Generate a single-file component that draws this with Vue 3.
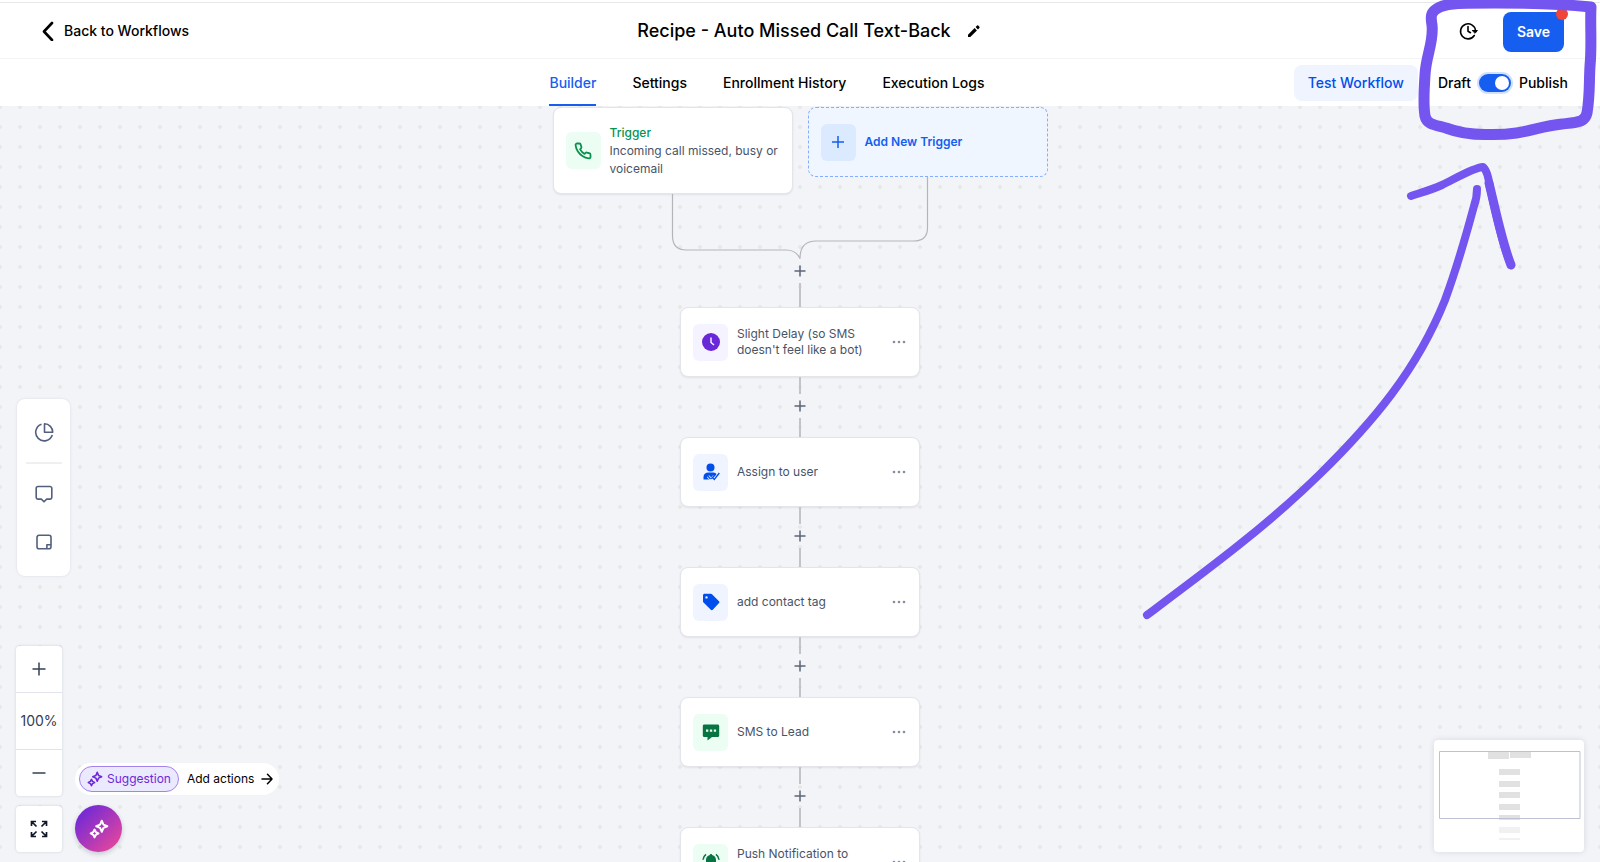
<script setup>
import { ref } from "vue";

const tabs = ["Builder", "Settings", "Enrollment History", "Execution Logs"];
const activeTab = ref("Builder");
const published = ref(true);
const zoom = ref(100);

const steps = [
  { id: 1, label: "Slight Delay (so SMS doesn't feel like a bot)", icon: "clock", tone: "purple" },
  { id: 2, label: "Assign to user", icon: "user", tone: "blue" },
  { id: 3, label: "add contact tag", icon: "tag", tone: "blue" },
  { id: 4, label: "SMS to Lead", icon: "sms", tone: "green" },
  { id: 5, label: "Push Notification to assigned user", icon: "bell", tone: "green" },
];
</script>

<template>
  <div class="page">
    <header class="topbar">
      <a href="#" class="back">
        <svg width="13" height="20" viewBox="0 0 13 20" fill="none" stroke="currentColor" stroke-width="2.600" stroke-linecap="round" stroke-linejoin="round">
          <path d="M10 2 2 10.500l8 8.500" />
        </svg>
        Back to Workflows
      </a>
      <div class="title">
        <h1>Recipe - Auto Missed Call Text-Back</h1>
        <button class="icon-button" aria-label="Rename workflow">
          <svg width="14" height="14" viewBox="0 0 14 14" fill="currentColor">
            <path d="M1 10.700V13h2.300l6.600-6.600-2.300-2.300zM8.600 3.100 10.100 1.600a.8.8 0 0 1 1.100 0l1.200 1.200a.8.8 0 0 1 0 1.100L10.900 5.400z" />
          </svg>
        </button>
      </div>
      <div class="save-area">
        <button class="icon-button" aria-label="Version history">
          <svg width="20" height="20" viewBox="0 0 20 20" fill="none" stroke="currentColor" stroke-width="1.600" stroke-linecap="round" stroke-linejoin="round">
            <path d="M15.300 14.500A7.500 7.500 0 1 1 16.500 9.500M9 5.500v4.700l2.500 1.500" />
            <path d="M13.600 9.500h4.800L16.300 12z" fill="currentColor" stroke-width="1" />
          </svg>
        </button>
        <button class="save">
          Save
          <span class="unsaved"></span>
        </button>
      </div>
    </header>

    <div class="tabbar">
      <nav class="tabs">
        <button
          v-for="tab in tabs"
          :key="tab"
          class="tab"
          :class="{ active: tab === activeTab }"
          @click="activeTab = tab"
        >
          {{ tab }}
        </button>
      </nav>
      <div class="publish-area">
        <button class="test">
          Test Workflow
        </button>
        <div class="publish">
          <label for="published">Draft</label>
          <input id="published" v-model="published" type="checkbox" role="switch">
          <label for="published">Publish</label>
        </div>
      </div>
    </div>

    <main class="canvas">
      <div class="flow">
        <div class="triggers">
          <article class="card trigger">
            <span class="badge green">
              <svg width="18" height="18" viewBox="0 0 24 24" fill="none" stroke="currentColor" stroke-width="2.400" stroke-linecap="round" stroke-linejoin="round">
                <path d="M22 16.900v3a2 2 0 0 1-2.200 2 19.800 19.800 0 0 1-8.600-3.100 19.500 19.500 0 0 1-6-6A19.800 19.800 0 0 1 2.100 4.200 2 2 0 0 1 4.100 2h3a2 2 0 0 1 2 1.700c.1 1 .4 1.900.7 2.800a2 2 0 0 1-.5 2.100L8.100 9.900a16 16 0 0 0 6 6l1.300-1.300a2 2 0 0 1 2.100-.4c.9.300 1.800.6 2.800.7A2 2 0 0 1 22 16.900z" />
              </svg>
            </span>
            <p class="trigger-text">
              <strong>Trigger</strong>
              Incoming call missed, busy or voicemail
            </p>
          </article>
          <button class="add-trigger">
            <span class="badge sky">
              <svg width="14" height="14" viewBox="0 0 14 14" stroke="currentColor" stroke-width="1.500"><path d="M7 1v12M1 7h12" /></svg>
            </span>
            Add New Trigger
          </button>
        </div>

        <svg class="merge" width="496" height="65" viewBox="0 0 496 65" fill="none" stroke="#b4b5bb" stroke-width="1.200">
          <path d="M120.500 0v42q0 14 14 14H234q10 0 14 8.500" />
          <path d="M375.500-17V34q0 13-14 13H264q-16 0-16 17.500" />
        </svg>

        <template v-for="(step, i) in steps" :key="step.id">
          <div class="connector" :class="{ first: i === 0 }">
            <button class="add-step" aria-label="Add step">
              <svg width="12" height="12" viewBox="0 0 12 12" stroke="currentColor" stroke-width="1.500"><path d="M6 .500v11M.500 6h11" /></svg>
            </button>
          </div>
          <article class="card step">
            <span class="badge" :class="step.tone">
              <svg v-if="step.icon === 'clock'" width="18" height="18" viewBox="0 0 18 18">
                <circle cx="9" cy="9" r="9" fill="currentColor" />
                <path d="M9 4.500V9.500l3 2.500" fill="none" stroke="#fff" stroke-width="1.400" />
              </svg>
              <svg v-else-if="step.icon === 'user'" width="18" height="18" viewBox="0 0 18 18" fill="none">
                <circle cx="8.500" cy="4.500" r="4" fill="currentColor" />
                <path d="M1.500 16.500V14c0-3 2-4.500 5-4.500h4c2 0 3.500.6 4.300 2L11 15.500l-1 1z" fill="currentColor" />
                <path d="m6 13.300 3.200 3.200 3-3.200M10.500 14.500l1.800 2L17.500 10" stroke="#eff4ff" stroke-width="3" />
                <path d="m6 13.300 2.600 2.700M10.300 14.300l2 2.200L17.300 10M9.300 15.800 13 12" stroke="currentColor" stroke-width="1.300" />
              </svg>
              <svg v-else-if="step.icon === 'tag'" width="18" height="18" viewBox="0 0 18 18" fill="currentColor">
                <path fill-rule="evenodd" d="M2.500.800h6.300c.5 0 .9.200 1.200.5l7 7c.5.500.5 1.300 0 1.800L10.800 16.800c-.6.600-1.500.6-2 0l-7.300-7.300c-.3-.3-.5-.8-.5-1.300V2.300c0-.8.700-1.500 1.500-1.500zM4.500 3.200a1.200 1.200 0 1 0 0 2.400 1.200 1.200 0 0 0 0-2.400z" />
              </svg>
              <svg v-else-if="step.icon === 'sms'" width="18" height="18" viewBox="0 0 18 18" fill="currentColor">
                <path fill-rule="evenodd" d="M2.300 1.500h13.400c.9 0 1.500.6 1.500 1.500v9.500c0 .9-.6 1.500-1.500 1.500H10l-4.500 3.500V14H2.300C1.400 14 .8 13.400.8 12.500V3c0-.9.600-1.500 1.500-1.500zM4 6.500v2.300h2.300V6.500zm3.900 0v2.300h2.300V6.500zm3.900 0v2.300h2.300V6.500z" />
              </svg>
              <svg v-else width="18" height="18" viewBox="0 0 18 18" fill="currentColor">
                <path d="M9 1c.7 0 1.200.5 1.200 1.100C12.600 2.600 14 4.500 14 7v4l1.500 2v1h-13v-1L4 11V7c0-2.500 1.400-4.400 3.800-4.900C7.800 1.500 8.300 1 9 1zM7 15h4a2 2 0 0 1-4 0z" />
                <path d="M4 1.300C2.200 2.600 1.200 4.300 1 6.800M14 1.300c1.800 1.300 2.800 3 3 5.500" fill="none" stroke="currentColor" stroke-width="1.600" />
              </svg>
            </span>
            <p>{{ step.label }}</p>
            <button class="more" aria-label="Step options">
              <svg width="14" height="4" viewBox="0 0 14 4" fill="currentColor">
                <circle cx="2" cy="2" r="1.300" /><circle cx="7" cy="2" r="1.300" /><circle cx="12" cy="2" r="1.300" />
              </svg>
            </button>
          </article>
        </template>
      </div>

      <aside class="side-tools">
        <button aria-label="Stats">
          <svg width="20" height="20" viewBox="0 0 20 20" fill="none" stroke="currentColor" stroke-width="1.600" stroke-linejoin="round">
            <path d="M7.500 2.300a8.500 8.500 0 1 0 10.800 10.700M10.500 1.800v8.500h8.200a8.300 8.300 0 0 0-8.200-8.500z" />
          </svg>
        </button>
        <hr>
        <button aria-label="Comments">
          <svg width="20" height="20" viewBox="0 0 20 20" fill="none" stroke="currentColor" stroke-width="1.600" stroke-linejoin="round">
            <path d="M4 2.500h12A1.800 1.800 0 0 1 17.800 4.300v9A1.800 1.800 0 0 1 16 15.100h-3.300L10 17.800l-2.700-2.700H4a1.800 1.800 0 0 1-1.800-1.800v-9A1.800 1.800 0 0 1 4 2.500z" />
          </svg>
        </button>
        <button aria-label="Notes">
          <svg width="20" height="20" viewBox="0 0 20 20" fill="none" stroke="currentColor" stroke-width="1.600" stroke-linejoin="round">
            <path d="M5 3.300h10a2 2 0 0 1 2 2v9.500a2 2 0 0 1-2 2H5a2 2 0 0 1-2-2V5.300a2 2 0 0 1 2-2zM17 12.700h-4.100v4.100" />
          </svg>
        </button>
      </aside>

      <div class="corner-tools">
        <div class="view-tools">
          <div class="zoom">
            <button aria-label="Zoom in" @click="zoom += 10">
              <svg width="14" height="14" viewBox="0 0 14 14" stroke="currentColor" stroke-width="1.500"><path d="M7 .500v13M.500 7h13" /></svg>
            </button>
            <output>{{ zoom }}%</output>
            <button aria-label="Zoom out" @click="zoom -= 10">
              <svg width="14" height="14" viewBox="0 0 14 14" stroke="currentColor" stroke-width="1.500"><path d="M.500 7h13" /></svg>
            </button>
          </div>
          <button class="fit" aria-label="Fit to screen">
            <svg width="18" height="18" viewBox="0 0 18 18" fill="none" stroke="currentColor" stroke-width="1.700">
              <path d="M6 1.500H1.500V6M1.500 1.500l5 5M12 1.500h4.500V6M16.500 1.500l-5 5M6 16.500H1.500V12M1.500 16.500l5-5M12 16.500h4.500V12M16.500 16.500l-5-5" />
            </svg>
          </button>
        </div>
        <div class="assistant">
          <div class="suggestions">
            <span class="chip">
              <svg width="16" height="16" viewBox="0 0 18 18" fill="none" stroke="currentColor" stroke-width="1.800" stroke-linejoin="round">
                <path d="M11.500 1.500 13 5l3.500 1.500L13 8l-1.500 3.500L10 8 6.500 6.500 10 5zM5 9.500l1.200 2.300L8.500 13l-2.300 1.200L5 16.500l-1.200-2.300L1.500 13l2.300-1.200z" />
              </svg>
              Suggestion
            </span>
            <button class="add-actions">
              Add actions
              <svg width="12" height="12" viewBox="0 0 12 12" fill="none" stroke="currentColor" stroke-width="1.500" stroke-linecap="round" stroke-linejoin="round">
                <path d="M1 6h10M6.500 1.200 11 6l-4.500 4.800" />
              </svg>
            </button>
          </div>
          <button class="ai" aria-label="AI assistant">
            <svg width="20" height="20" viewBox="0 0 18 18" fill="none" stroke="currentColor" stroke-width="1.800" stroke-linejoin="round">
              <path d="M11.500 1.500 13 5l3.500 1.500L13 8l-1.500 3.500L10 8 6.500 6.500 10 5zM5 9.500l1.200 2.300L8.500 13l-2.300 1.200L5 16.500l-1.200-2.300L1.500 13l2.300-1.200z" />
            </svg>
          </button>
        </div>
      </div>

      <svg class="minimap" width="150" height="112" viewBox="0 0 150 112">
        <g fill="#e1e1e1">
          <path d="M54 12h21v7H54zM76 12h21v6H76z" />
          <path d="M65 29h21v6H65zM65 41h21v6H65zM65 52h21v6H65zM65 64h21v6H65zM65 75h21v5H65z" />
        </g>
        <path d="M65 87h21v6H65zM65 98h21v2H65z" fill="#f1f1f1" />
        <path d="M5.500 11.500h140.500v67H5.500z" fill="none" stroke="#bcc1d4" />
      </svg>
    </main>

    <svg class="ink" width="480" height="640" viewBox="1120 0 480 640" fill="none" stroke="#7455f0" stroke-linecap="round" stroke-linejoin="round">
      <path stroke-width="11" d="M1591 7C1560 4 1530 3 1495 3S1450 3 1440 7C1429 12 1431 18 1432 25C1434 42 1426 55 1425 75C1424 90 1423 104 1425 116C1427 125 1436 125 1446 128C1462 134 1475 135 1490 134.500C1525 135 1535 127 1562 124C1579 122 1585 122 1587 113C1590 96 1589 82 1590 66C1592 45 1590 25 1591 7" />
      <path stroke-width="8" d="M1147 615C1206 571 1267 526 1320 474C1373 422 1417 370 1445 300C1456 270 1467 232 1474 206C1477 198 1477 194 1477 189" />
      <path stroke-width="8" d="M1411 196C1420 193 1431 190 1442 185C1453 180 1472 168 1483 167C1487 170 1489 180 1490 188C1496 212 1501 242 1511 265" />
      <path stroke-width="9" d="M1489 183C1496 212 1502 242 1511 265" />
    </svg>
  </div>
</template>

<style>
body {
  margin: 0;
}
</style>

<style scoped>
.page {
  position: relative;
  display: flex;
  flex-direction: column;
  height: 100vh;
  overflow: hidden;
  background: #fff;
  color: #000;
  font-family: Inter, "Liberation Sans", sans-serif;
  font-size: 14px;
  font-weight: 500;
  line-height: 20px;
}

button {
  display: flex;
  align-items: center;
  justify-content: center;
  margin: 0;
  padding: 0;
  border: none;
  background: none;
  color: inherit;
  font: inherit;
  cursor: pointer;
}

svg {
  flex: none;
}

p {
  margin: 0;
}

.topbar {
  display: grid;
  grid-template-columns: 1fr auto 1fr;
  align-items: center;
  height: 55px;
  margin-top: 2px;
  padding: 0 36px 0 42px;
  border-top: 1px solid #e5e7e8;
  border-bottom: 1px solid #f3f4f6;
}

.back {
  display: flex;
  align-items: center;
  gap: 9px;
  color: inherit;
  text-decoration: none;
}

.title {
  display: flex;
  align-items: center;
  gap: 16px;
  padding-left: 12px;
}

.title h1 {
  margin: 0;
  font-size: 18px;
  font-weight: 500;
  line-height: 28px;
}

.save-area {
  display: flex;
  align-items: center;
  justify-content: flex-end;
  gap: 24px;
}

.save {
  position: relative;
  width: 61px;
  height: 40px;
  margin-top: 3px;
  border-radius: 8px;
  background: #155eef;
  color: #fff;
  font-weight: 600;
}

.unsaved {
  position: absolute;
  top: -4px;
  right: -4px;
  width: 12px;
  height: 12px;
  border-radius: 50%;
  background: #f04438;
}

.tabbar {
  display: grid;
  grid-template-columns: 1fr auto 1fr;
  height: 47px;
  padding-right: 32px;
}

.tabs {
  display: flex;
  grid-column: 2;
  gap: 36px;
  padding-right: 34px;
}

.tab {
  border-top: 2px solid transparent;
  border-bottom: 2px solid transparent;
}

.tab.active {
  border-bottom-color: #155eef;
  color: #155eef;
}

.publish-area {
  display: flex;
  align-items: center;
  justify-content: flex-end;
  gap: 20px;
}

.test {
  height: 36px;
  padding: 0 14px;
  border-radius: 8px;
  background: #eff4ff;
  color: #004eeb;
}

.publish {
  display: flex;
  align-items: center;
  gap: 8px;
}

.publish input {
  display: flex;
  align-items: center;
  width: 32px;
  height: 18px;
  margin: 0;
  padding: 2px;
  border-radius: 9px;
  box-sizing: border-box;
  background: #98a2b3;
  appearance: none;
}

.publish input::before {
  width: 14px;
  height: 14px;
  border-radius: 50%;
  background: #fff;
  content: "";
}

.publish input:checked {
  justify-content: flex-end;
  background: #155eef;
  box-shadow: 0 0 0 2px #d1e0ff;
}

.canvas {
  position: relative;
  flex: 1;
  overflow: hidden;
  background: #f2f4f8 radial-gradient(circle at center, #e7e8e8 0 2px, transparent 2px) -10px -9px / 20px 20px;
}

.flow {
  display: flex;
  flex-direction: column;
  align-items: center;
  padding-top: 1px;
}

.triggers {
  display: flex;
  align-items: flex-start;
  gap: 15px;
  height: 87px;
}

.merge {
  overflow: visible;
}

.card,
.add-trigger {
  display: flex;
  align-items: center;
  gap: 9px;
  width: 240px;
  height: 70px;
  padding: 0 12px;
  border: 1px solid #e4e5eb;
  border-radius: 8px;
  box-sizing: border-box;
  background: #fff;
  color: #475467;
  font-size: 12px;
  font-weight: 400;
  line-height: 16px;
}

.card {
  flex: none;
  box-shadow: 0 1px 2px #10182814;
}

.card p {
  flex: 1;
}

.trigger {
  height: 87px;
}

.trigger-text {
  line-height: 18px;
}

.trigger-text strong {
  display: block;
  color: #099250;
  font-weight: 500;
}

.add-trigger {
  justify-content: flex-start;
  border: 1px dashed #84adff;
  background: #eff6ff;
  color: #155eef;
  font-weight: 600;
}

.badge {
  display: flex;
  flex: none;
  align-items: center;
  justify-content: center;
  width: 35px;
  height: 37px;
  border-radius: 6px;
}

.green {
  background: #ecfdf3;
  color: #087443;
}

.trigger .green {
  color: #099250;
}

.blue {
  background: #eff4ff;
  color: #004eeb;
}

.purple {
  background: #f4f3ff;
  color: #6927da;
}

.sky {
  background: #dbeafe;
}

.more {
  width: 16px;
  height: 24px;
  color: #858da0;
}

.connector {
  display: flex;
  flex: none;
  flex-direction: column;
  align-items: center;
  height: 60px;
}

.connector::before,
.connector::after {
  flex: 17 0 0;
  width: 2px;
  background: #c3c4c9;
  content: "";
}

.connector::after {
  flex-grow: 19;
}

.connector.first {
  height: 48px;
}

.connector.first::before {
  display: none;
}

.add-step {
  width: 24px;
  height: 24px;
  color: #5d6675;
}

.side-tools {
  position: absolute;
  top: 293px;
  left: 17px;
  display: flex;
  flex-direction: column;
  align-items: center;
  width: 53px;
  padding: 9px 0 10px;
  border-radius: 8px;
  background: #fff;
  box-shadow: 0 0 3px #1018281a;
  color: #52607d;
}

.side-tools button {
  width: 48px;
  height: 48px;
}

.side-tools hr {
  width: 36px;
  height: 2px;
  margin: 6px 0;
  border: none;
  background: #eeeff1;
}

.corner-tools {
  position: absolute;
  bottom: 10px;
  left: 16px;
  display: flex;
  align-items: flex-end;
  gap: 13px;
}

.view-tools,
.assistant {
  display: flex;
  flex-direction: column;
  align-items: flex-start;
  gap: 10px;
}

.zoom,
.fit {
  width: 46px;
  border-radius: 4px;
  background: #fff;
  box-shadow: 0 0 3px #10182826;
  color: #344054;
}

.zoom button,
.fit {
  height: 46px;
}

.zoom button {
  width: 100%;
}

.zoom output {
  display: block;
  border: solid #e1e4ea;
  border-width: 1px 0;
  font-weight: 400;
  line-height: 56px;
  text-align: center;
}

.fit {
  color: #101828;
}

.suggestions {
  display: flex;
  align-items: center;
  gap: 8px;
  height: 32px;
  padding: 0 6px 0 4px;
  border-radius: 16px;
  background: #fff;
  font-size: 12px;
}

.chip {
  display: flex;
  align-items: center;
  gap: 4px;
  height: 24px;
  padding: 0 7px;
  border: 1px solid #a583ee;
  border-radius: 13px;
  background: #ebe9fe;
  color: #6d28d9;
  font-weight: 400;
}

.add-actions {
  gap: 7px;
  font-weight: 400;
}

.ai {
  width: 47px;
  height: 47px;
  border-radius: 50%;
  background: linear-gradient(135deg, #6d28d9 10%, #ec4899 95%);
  box-shadow: 0 2px 5px #10182833;
  color: #fff;
}

.minimap {
  position: absolute;
  right: 16px;
  bottom: 10px;
  border-radius: 4px;
  background: #fff;
  box-shadow: 0 0 6px #1018281f;
}

.ink {
  position: absolute;
  top: 0;
  right: 0;
  pointer-events: none;
}
</style>
